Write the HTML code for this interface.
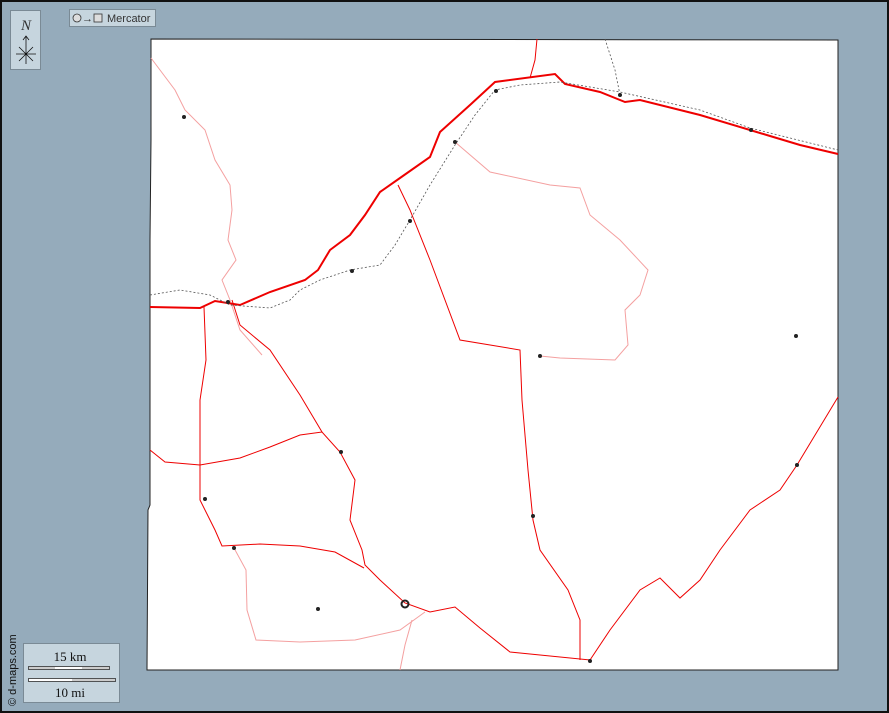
<!DOCTYPE html>
<html><head><meta charset="utf-8"><style>
html,body{margin:0;padding:0}
body{width:889px;height:713px;overflow:hidden;background:#95abbb;position:relative;font-family:"Liberation Serif",serif}
.frame{position:absolute;left:0;top:0;width:885px;height:709px;border:2px solid #111}
</style></head><body>
<svg width="889" height="713" style="position:absolute;left:0;top:0">
<rect x="1" y="1" width="887" height="711" fill="#95abbb" stroke="#111" stroke-width="2"/>
<polygon points="151,39 838,40 838,670 147,670 148,510 150,505 150,240 151,140 151,39" fill="#fff" stroke="#222" stroke-width="1"/>
<g fill="none" stroke="#f4a0a0" stroke-width="1">
<path d="M151,58 L160,70 175,90 185,110 205,130 215,160 230,185 232,210 228,240 236,260 222,280 230,300 240,330 262,355"/>
<path d="M455,142 L490,172 550,185 580,188 590,215 620,240 648,270 640,295 625,310 628,345 615,360 560,358 540,356"/>
<path d="M234,548 L246,570 247,610 256,640 300,642 355,640 400,630 425,612"/>
<path d="M412,620 L405,645 400,670"/>
</g>
<g fill="none" stroke="#e00" stroke-width="1">
<path d="M398,185 L410,210 430,260 460,340 520,350 522,400 528,470 533,520 540,550 568,590 580,620 580,660"/>
<path d="M150,450 L165,462 200,465 240,458 270,447 300,435 322,432 340,452 355,480 350,520 362,550 365,565 380,580 405,603 430,612 455,607 480,628 510,652 590,660 610,630 640,590 660,578 680,598 700,580 720,550 750,510 780,490 797,465 838,397"/>
<path d="M204,307 L206,360 200,400 200,500 215,530 222,546 260,544 300,546 335,552 364,568"/>
<path d="M232,300 L240,325 270,350 300,395 322,432"/>
<path d="M537,39 L535,60 530,78"/>
</g>
<path d="M150,307 L200,308 215,301 240,305 270,292 305,280 318,270 330,250 350,235 365,215 380,192 400,178 430,157 440,132 470,105 495,82 555,74 565,84 600,92 625,102 640,100 700,115 750,130 770,136 800,145 838,154" fill="none" stroke="#e00" stroke-width="2"/>
<g fill="none" stroke="#555" stroke-width="0.8" stroke-dasharray="2,2">
<path d="M150,295 L180,290 210,295 230,305 270,308 290,300 300,290 320,280 350,270 380,265 395,245 410,220 430,185 455,145 475,115 495,90 520,85 560,82 620,92 700,110 750,128 838,150"/>
<path d="M605,39 L615,70 620,95"/>
</g>
<g fill="#222">
<circle cx="184" cy="117" r="2"/><circle cx="228" cy="302" r="2"/><circle cx="352" cy="271" r="2"/>
<circle cx="410" cy="221" r="2"/><circle cx="455" cy="142" r="2"/><circle cx="496" cy="91" r="2"/>
<circle cx="620" cy="95" r="2"/><circle cx="751" cy="130" r="2"/><circle cx="540" cy="356" r="2"/>
<circle cx="796" cy="336" r="2"/><circle cx="797" cy="465" r="2"/><circle cx="533" cy="516" r="2"/>
<circle cx="341" cy="452" r="2"/><circle cx="205" cy="499" r="2"/><circle cx="234" cy="548" r="2"/>
<circle cx="318" cy="609" r="2"/><circle cx="590" cy="661" r="2"/>
</g>
<circle cx="405" cy="604" r="3.5" fill="none" stroke="#222" stroke-width="2"/>
<rect x="10.5" y="10.5" width="30" height="59" fill="#c6d5de" stroke="#7a8a95"/>
<text x="26" y="30" font-size="15" font-style="italic" text-anchor="middle" fill="#333">N</text>
<path d="M26,36 V64 M16,54 H36 M19,47 L33,61 M33,47 L19,61 M23,40 L26,36 L29,40" stroke="#111" stroke-width="0.8" fill="none"/>
<rect x="69.5" y="9.5" width="86" height="17" fill="#c6d5de" stroke="#7a8a95"/>
<circle cx="77" cy="18" r="4" fill="#ddd" stroke="#333" stroke-width="0.8"/>
<text x="82" y="22" font-size="11" font-family="Liberation Sans" fill="#333">→</text>
<rect x="94" y="14" width="8" height="8" fill="#ddd" stroke="#333" stroke-width="0.8"/>
<text x="107" y="22" font-size="11" font-family="Liberation Sans" fill="#333">Mercator</text>
<rect x="23.5" y="643.5" width="96" height="59" fill="#c6d5de" stroke="#7a8a95"/>
<text x="70" y="661" font-size="13" text-anchor="middle" fill="#111">15 km</text>
<rect x="28.5" y="666.5" width="81" height="3" fill="#ccc" stroke="#333" stroke-width="0.8"/>
<rect x="55" y="667" width="27" height="2" fill="#fff"/>
<rect x="28.5" y="678.5" width="87" height="3" fill="#ccc" stroke="#333" stroke-width="0.8"/>
<rect x="29" y="679" width="43" height="2" fill="#fff"/>
<text x="70" y="697" font-size="13" text-anchor="middle" fill="#111">10 mi</text>
<text transform="translate(16,706) rotate(-90)" font-size="11" font-family="Liberation Sans" fill="#111">© d-maps.com</text>
</svg>
</body></html>
